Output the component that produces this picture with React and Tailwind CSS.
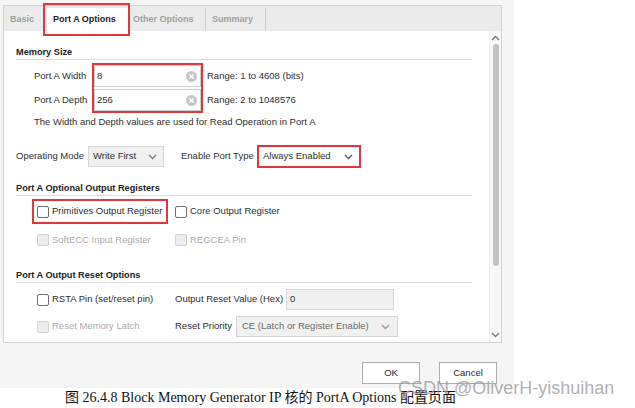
import React from "react";

const Chevron = ({ up = false, color = "#7a7a7a" }) => (
  <svg width="9" height="6" viewBox="0 0 9 6" className="shrink-0">
    <path
      d={up ? "M1 5L4.5 1.5L8 5" : "M1 1L4.5 4.5L8 1"}
      fill="none"
      stroke={color}
      strokeWidth="1.3"
    />
  </svg>
);

const ClearIcon = () => (
  <svg width="11" height="11" viewBox="0 0 11 11" className="shrink-0">
    <circle cx="5.5" cy="5.5" r="5.5" fill="#c6c6c6" />
    <path d="M3.4 3.4L7.6 7.6M7.6 3.4L3.4 7.6" stroke="#fff" strokeWidth="1.4" />
  </svg>
);

const Checkbox = ({ disabled = false }) =>
  disabled ? (
    <span className="block w-[12px] h-[12px] rounded-[2px] border border-[#d2d2d2] bg-[#ececec] shrink-0" />
  ) : (
    <span className="block w-[12px] h-[12px] rounded-[2px] border border-[#6e6e6e] bg-white shrink-0" />
  );

const Heading = ({ children, className = "" }) => (
  <div
    className={`w-[456px] h-[14px] border-b border-[#dadada] font-bold text-[9.2px] leading-[12px] text-[#222] ${className}`}
  >
    {children}
  </div>
);

export default function App() {
  return (
    <div className="relative w-[635px] h-[408px] bg-white overflow-hidden font-['Liberation_Sans',Arial,sans-serif] text-[9.5px] text-[#2e2e2e]">
      <div className="w-[514px] h-[388px] bg-[#f5f5f5] pt-[5px] pl-[3px]">
        {/* Panel */}
        <div className="w-[499px] h-[338px] border border-[#d2d2d2] bg-white flex flex-col">
          {/* Tab bar */}
          <div className="h-[25px] bg-[#ebebeb] flex items-end shrink-0">
            <div className="w-[43px] h-[23px] pl-[6px] flex items-center text-[#a0a0a0] font-bold text-[9px]">
              Basic
            </div>
            <div className="relative w-[81px] h-[23px] pl-[6px] flex items-center bg-white font-bold text-[9px] text-[#222]">
              Port A Options
              <div className="absolute left-[-4px] top-[-5px] w-[87px] h-[33px] border-2 border-[#e0363c]" />
            </div>
            <div className="w-[78px] h-[23px] pl-[5px] flex items-center text-[#a0a0a0] font-bold text-[9px] border-r border-[#cfcfcf]">
              Other Options
            </div>
            <div className="w-[60px] h-[23px] pl-[6px] flex items-center text-[#a0a0a0] font-bold text-[9px] border-r border-[#cfcfcf]">
              Summary
            </div>
          </div>

          {/* Body */}
          <div className="flex flex-1 min-h-0">
            <div className="flex-1 pl-[12px] flex flex-col">
              <Heading className="mt-[15px]">Memory Size</Heading>

              <div className="mt-[3px] flex">
                <div className="w-[58px] ml-[18px] flex flex-col pt-[2px]">
                  <div className="h-[22px] flex items-center">Port A Width</div>
                  <div className="h-[22px] mt-[2px] flex items-center">Port A Depth</div>
                </div>
                <div className="border-2 border-[#e0363c] w-[111px] flex flex-col">
                  <div className="h-[22px] border border-[#cfcfcf] pl-[2px] pr-[3px] flex items-center justify-between bg-white">
                    <span>8</span>
                    <ClearIcon />
                  </div>
                  <div className="h-[22px] mt-[2px] border border-[#cfcfcf] pl-[2px] pr-[3px] flex items-center justify-between bg-white">
                    <span>256</span>
                    <ClearIcon />
                  </div>
                </div>
                <div className="ml-[4px] flex flex-col pt-[2px]">
                  <div className="h-[22px] flex items-center">Range: 1 to 4608 (bits)</div>
                  <div className="h-[22px] mt-[2px] flex items-center">Range: 2 to 1048576</div>
                </div>
              </div>

              <div className="mt-[3px] ml-[18px] leading-[12px]">
                The Width and Depth values are used for Read Operation in Port A
              </div>

              <div className="mt-[17px] h-[23px] flex items-center">
                <div className="w-[72px]">Operating Mode</div>
                <div className="w-[76px] h-[21px] bg-[#f0f0f0] border border-[#d6d6d6] pl-[4px] pr-[6px] flex items-center justify-between">
                  <span>Write First</span>
                  <Chevron />
                </div>
                <div className="ml-[17px] w-[76px]">Enable Port Type</div>
                <div className="w-[104px] h-[23px] border-2 border-[#e0363c] bg-white pl-[4px] pr-[6px] flex items-center justify-between">
                  <span>Always Enabled</span>
                  <Chevron color="#555" />
                </div>
              </div>

              <Heading className="mt-[14px]">Port A Optional Output Registers</Heading>

              <div className="mt-[3px] h-[25px] flex items-center">
                <div className="ml-[16px] w-[136px] h-[25px] border-2 border-[#e0363c] pl-[3px] flex items-center gap-[3px]">
                  <Checkbox />
                  <span>Primitives Output Register</span>
                </div>
                <div className="ml-[7px] flex items-center gap-[3px]">
                  <Checkbox />
                  <span>Core Output Register</span>
                </div>
              </div>

              <div className="mt-[6px] h-[20px] flex items-center text-[#ababab]">
                <div className="ml-[21px] w-[138px] flex items-center gap-[3px]">
                  <Checkbox disabled />
                  <span>SoftECC Input Register</span>
                </div>
                <div className="flex items-center gap-[3px]">
                  <Checkbox disabled />
                  <span>REGCEA Pin</span>
                </div>
              </div>

              <Heading className="mt-[19px]">Port A Output Reset Options</Heading>

              <div className="mt-[6px] h-[21px] flex items-center">
                <div className="ml-[21px] w-[138px] flex items-center gap-[3px]">
                  <Checkbox />
                  <span>RSTA Pin (set/reset pin)</span>
                </div>
                <div className="w-[111px]">Output Reset Value (Hex)</div>
                <div className="w-[108px] h-[21px] bg-[#f0f0f0] border border-[#d6d6d6] pl-[3px] flex items-center">
                  0
                </div>
              </div>

              <div className="mt-[6px] h-[21px] flex items-center">
                <div className="ml-[21px] w-[138px] flex items-center gap-[3px] text-[#ababab]">
                  <Checkbox disabled />
                  <span>Reset Memory Latch</span>
                </div>
                <div className="w-[61px]">Reset Priority</div>
                <div className="w-[162px] h-[21px] bg-[#f0f0f0] border border-[#d6d6d6] pl-[5px] pr-[7px] flex items-center justify-between text-[#6a6a6a]">
                  <span>CE (Latch or Register Enable)</span>
                  <Chevron color="#999" />
                </div>
              </div>
            </div>

            {/* Scrollbar */}
            <div className="w-[12px] border-l border-[#ececec] bg-[#f7f7f7] flex flex-col items-center pt-[4px] pb-[4px]">
              <Chevron up color="#777" />
              <div className="mt-[3px] w-[6px] h-[222px] rounded-full bg-[#c2c2c2]" />
              <div className="flex-1" />
              <Chevron color="#777" />
            </div>
          </div>
        </div>

        {/* Buttons */}
        <div className="mt-[19px] ml-[359px] flex gap-[19px]">
          <div className="w-[58px] h-[22px] bg-white border border-[#adadad] flex items-center justify-center">
            OK
          </div>
          <div className="w-[58px] h-[22px] bg-white border border-[#adadad] flex items-center justify-center">
            Cancel
          </div>
        </div>
      </div>

      {/* Caption */}
      <div className="h-[20px] pl-[65px] leading-[20px] text-[14px] text-[#111] font-['Liberation_Serif','Noto_Sans_CJK_SC',serif] whitespace-nowrap">
        图 26.4.8 Block Memory Generator IP 核的 PortA Options 配置页面
      </div>

      {/* Watermark */}
      <div className="absolute left-[398px] top-[379px] text-[18px] leading-[18px] text-[#9a9a9a]/80 whitespace-nowrap">
        CSDN @OliverH-yishuihan
      </div>
    </div>
  );
}
